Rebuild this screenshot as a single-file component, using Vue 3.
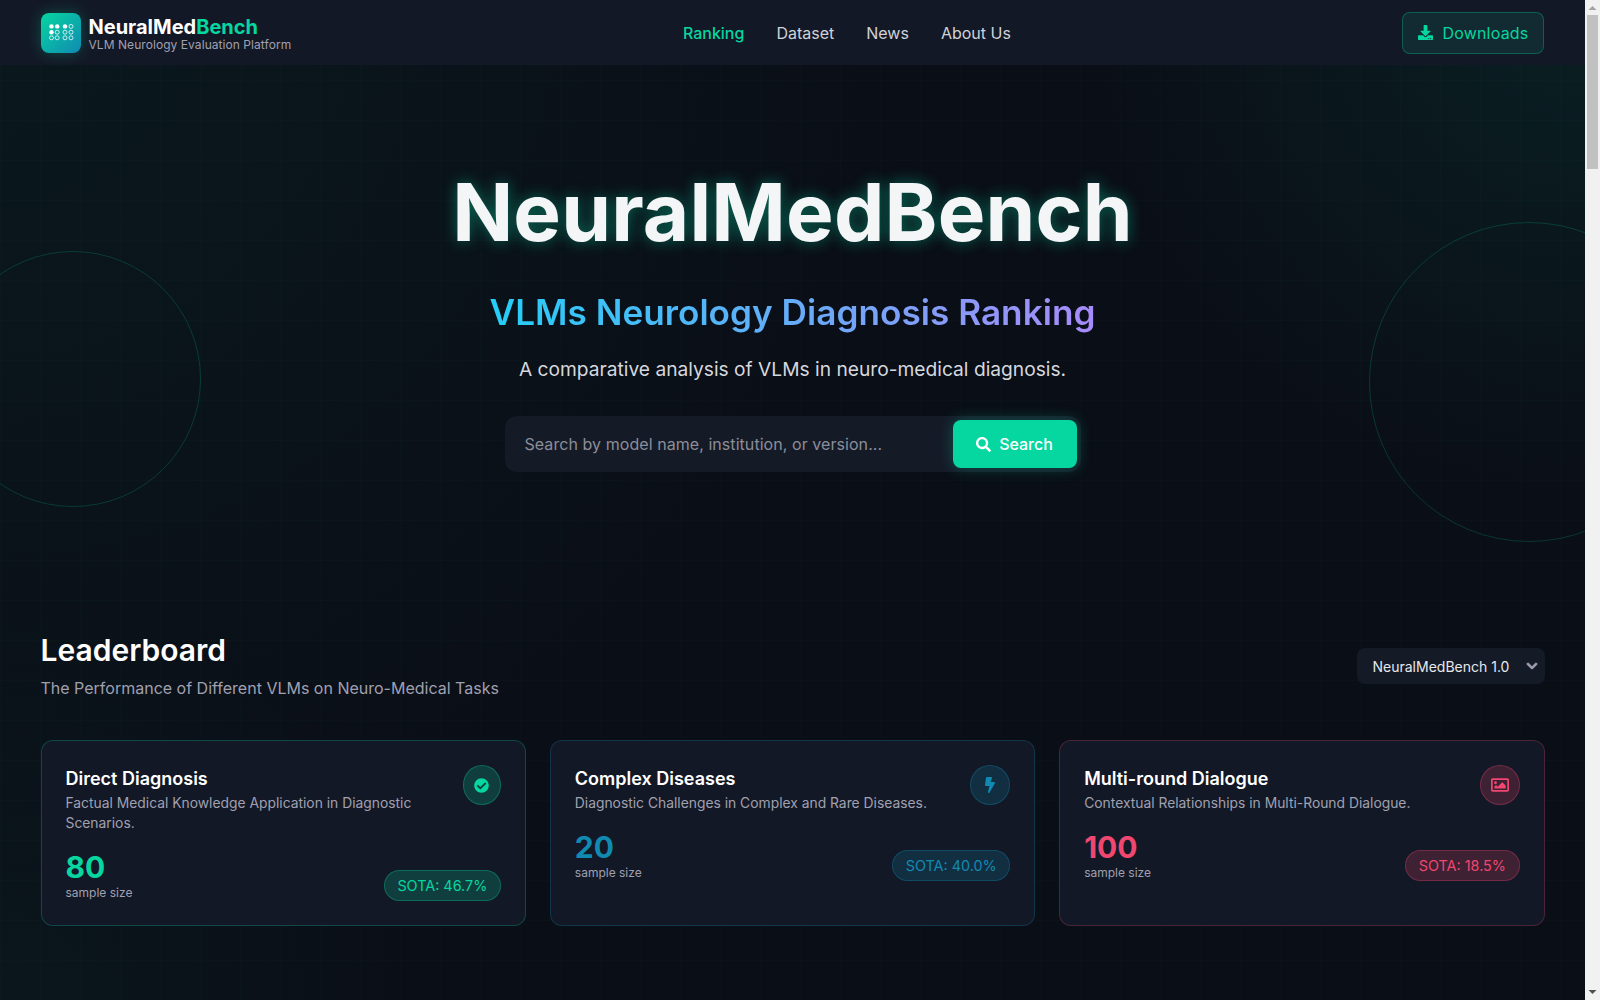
<template>
  <div class="page">
    <div class="content">
      <header class="navbar">
        <div class="nav-inner">
          <a class="brand">
            <span class="logo">
              <svg width="26" height="18" viewBox="0 0 26 18">
                <circle cx="3.5" cy="2.4" r="2.2" fill="#fff" />
                <circle cx="9.2" cy="2.4" r="2.2" fill="#fff" />
                <circle cx="17" cy="2.4" r="2.2" fill="#fff" />
                <circle cx="23" cy="2.4" r="2" class="ring" />
                <circle cx="3.5" cy="8.2" r="2.2" fill="#fff" />
                <circle cx="9.2" cy="8.2" r="2" class="ring" />
                <circle cx="17" cy="8.2" r="2" class="ring" />
                <circle cx="23" cy="8.2" r="2" class="ring" />
                <circle cx="3.5" cy="13.8" r="2" class="ring" />
                <circle cx="9.2" cy="13.8" r="2" class="ring" />
                <circle cx="17" cy="13.8" r="2" class="ring" />
                <circle cx="23" cy="13.8" r="2" class="ring" />
              </svg>
            </span>
            <span class="brand-text">
              <span class="brand-name">NeuralMed<em>Bench</em></span>
              <span class="brand-sub">VLM Neurology Evaluation Platform</span>
            </span>
          </a>
          <nav class="nav-links">
            <a class="active">Ranking</a>
            <a>Dataset</a>
            <a>News</a>
            <a>About Us</a>
          </nav>
          <button class="download-btn">
            <svg width="15" height="15" viewBox="0 0 512 512" fill="currentColor">
              <path d="M216 0h80c13.3 0 24 10.7 24 24v168h87.7c17.8 0 26.7 21.5 14.1 34.1L269.7 378.3c-7.5 7.5-19.8 7.5-27.3 0L90.1 226.1c-12.6-12.6-3.7-34.1 14.1-34.1H192V24c0-13.3 10.7-24 24-24zm296 376v112c0 13.3-10.7 24-24 24H24c-13.3 0-24-10.7-24-24V376c0-13.3 10.7-24 24-24h146.7l49 49c20.1 20.1 52.5 20.1 72.6 0l49-49H488c13.3 0 24 10.7 24 24zm-124 88c0-11-9-20-20-20s-20 9-20 20 9 20 20 20 20-9 20-20zm64 0c0-11-9-20-20-20s-20 9-20 20 9 20 20 20 20-9 20-20z" />
            </svg>
            Downloads
          </button>
        </div>
      </header>

      <section class="hero">
        <span class="circle circle-left"></span>
        <span class="circle circle-right"></span>
        <h1>NeuralMedBench</h1>
        <h2><span>VLMs Neurology Diagnosis Ranking</span></h2>
        <p>A comparative analysis of VLMs in neuro-medical diagnosis.</p>
        <div class="search-box">
          <input type="text" placeholder="Search by model name, institution, or version..." />
          <button class="search-btn">
            <svg width="15" height="15" viewBox="0 0 512 512" fill="currentColor">
              <path d="M505 442.7L405.3 343c-4.5-4.5-10.6-7-17-7H372c27.6-35.3 44-79.7 44-128C416 93.1 322.9 0 208 0S0 93.1 0 208s93.1 208 208 208c48.3 0 92.7-16.4 128-44v16.3c0 6.4 2.5 12.5 7 17l99.7 99.7c9.4 9.4 24.6 9.4 33.9 0l28.3-28.3c9.4-9.4 9.4-24.6.1-34zM208 336c-70.7 0-128-57.2-128-128 0-70.7 57.2-128 128-128 70.7 0 128 57.2 128 128 0 70.7-57.2 128-128 128z" />
            </svg>
            Search
          </button>
        </div>
      </section>

      <section class="leaderboard">
        <div class="board-head">
          <div>
            <h3>Leaderboard</h3>
            <p>The Performance of Different VLMs on Neuro-Medical Tasks</p>
          </div>
          <div class="version-select">
            NeuralMedBench 1.0
            <svg width="12" height="12" viewBox="0 0 448 512" fill="currentColor" stroke="currentColor" stroke-width="36">
              <path d="M207.029 381.476L12.686 187.132c-9.373-9.373-9.373-24.569 0-33.941l22.667-22.667c9.357-9.357 24.522-9.375 33.901-.04L224 284.505l154.745-154.021c9.379-9.335 24.544-9.317 33.901.04l22.667 22.667c9.373 9.373 9.373 24.569 0 33.941L240.971 381.476c-9.373 9.372-24.569 9.372-33.942 0z" />
            </svg>
          </div>
        </div>

        <div class="cards">
          <article v-for="card in cards" :key="card.title" class="card" :class="card.tone">
            <div class="card-top">
              <div>
                <h4>{{ card.title }}</h4>
                <p>{{ card.desc }}</p>
              </div>
              <span class="card-icon">
                <svg :width="card.iconW" :height="card.iconH" :viewBox="card.viewBox" fill="currentColor">
                  <path :d="card.icon" />
                </svg>
              </span>
            </div>
            <div class="card-bottom">
              <div>
                <div class="stat">{{ card.stat }}</div>
                <div class="stat-label">sample size</div>
              </div>
              <span class="sota">SOTA: {{ card.sota }}</span>
            </div>
          </article>
        </div>
      </section>
    </div>

    <aside class="scrollbar">
      <svg width="15" height="15" viewBox="0 0 15 15"><path d="M3.5 10L7.5 6L11.5 10Z" fill="#a3a3a3" /></svg>
      <span class="thumb"></span>
      <span class="track"></span>
      <svg width="15" height="15" viewBox="0 0 15 15"><path d="M3.5 5L7.5 9L11.5 5Z" fill="#505050" /></svg>
    </aside>
  </div>
</template>

<script setup>
const cards = [
  {
    title: "Direct Diagnosis",
    desc: "Factual Medical Knowledge Application in Diagnostic Scenarios.",
    stat: 80,
    sota: "46.7%",
    tone: "green",
    iconW: 15,
    iconH: 15,
    viewBox: "0 0 512 512",
    icon: "M504 256c0 136.967-111.033 248-248 248S8 392.967 8 256 119.033 8 256 8s248 111.033 248 248zM227.314 387.314l184-184c6.248-6.248 6.248-16.379 0-22.627l-22.627-22.627c-6.248-6.249-16.379-6.249-22.628 0L216 308.118l-70.059-70.059c-6.248-6.248-16.379-6.248-22.628 0l-22.627 22.627c-6.248 6.248-6.248 16.379 0 22.627l104 104c6.249 6.249 16.379 6.249 22.628.001z",
  },
  {
    title: "Complex Diseases",
    desc: "Diagnostic Challenges in Complex and Rare Diseases.",
    stat: 20,
    sota: "40.0%",
    tone: "blue",
    iconW: 10,
    iconH: 16,
    viewBox: "0 0 320 512",
    icon: "M296 160H180.6l42.6-129.8C227.2 15 215.7 0 200 0H56C44 0 33.8 8.9 32.2 20.8l-32 240C-1.7 275.2 9.5 288 24 288h118.7L96.6 482.5c-3.6 15.2 8 29.5 23.3 29.5 8.4 0 16.4-4.4 20.8-12l176-304c9.3-15.9-2.2-36-20.7-36z",
  },
  {
    title: "Multi-round Dialogue",
    desc: "Contextual Relationships in Multi-Round Dialogue.",
    stat: 100,
    sota: "18.5%",
    tone: "red",
    iconW: 18,
    iconH: 18,
    viewBox: "0 0 512 512",
    icon: "M464 64H48C21.49 64 0 85.49 0 112v288c0 26.51 21.49 48 48 48h416c26.51 0 48-21.49 48-48V112c0-26.51-21.49-48-48-48zm-6 336H54a6 6 0 0 1-6-6V118a6 6 0 0 1 6-6h404a6 6 0 0 1 6 6v276a6 6 0 0 1-6 6zM128 152c-22.091 0-40 17.909-40 40s17.909 40 40 40 40-17.909 40-40-17.909-40-40-40zM96 352h320v-80l-87.515-87.515c-4.686-4.686-12.284-4.686-16.971 0L192 304l-39.515-39.515c-4.686-4.686-12.284-4.686-16.971 0L96 304v48z",
  },
];
</script>

<style>
html,
body {
  background: #0a0e17;
  overflow: hidden;
}
</style>

<style scoped>
.page {
  --green: #06d6a0;
  --blue: #118ab2;
  --red: #ef476f;
  display: flex;
  height: 100vh;
  overflow: hidden;
  font-family: Inter, "Noto Sans", sans-serif;
  color: #f8f9fa;
}

.scrollbar {
  flex: none;
  width: 15px;
  display: flex;
  flex-direction: column;
  align-items: center;
  background: #f1f1f1;
}

.scrollbar svg {
  flex: none;
}

.thumb {
  flex: none;
  width: 11px;
  height: 154px;
  background: #c1c1c1;
}

.track {
  flex: 1;
}

.content {
  position: relative;
  flex: 1;
  min-width: 0;
  overflow: hidden;
  background-color: #0a0e17;
  background-image:
    linear-gradient(rgba(6, 214, 160, 0.015) 1px, transparent 1px),
    linear-gradient(90deg, rgba(6, 214, 160, 0.015) 1px, transparent 1px),
    radial-gradient(circle at 100% 0, rgba(6, 214, 160, 0.09), transparent 500px),
    radial-gradient(circle at 0 0, rgba(6, 214, 160, 0.05), transparent 900px),
    radial-gradient(circle at 0 1000px, rgba(6, 214, 160, 0.04), transparent 420px);
  background-size: 40px 40px, 40px 40px, 100% 100%, 100% 100%, 100% 100%;
}

.navbar {
  position: relative;
  z-index: 2;
  height: 65px;
  background: #131826;
}

.nav-inner {
  width: 1504px;
  height: 100%;
  margin: 0 auto;
  display: flex;
  justify-content: space-between;
  align-items: center;
}

.brand {
  display: flex;
  align-items: center;
  gap: 8px;
}

.logo {
  width: 40px;
  height: 40px;
  border-radius: 8px;
  display: flex;
  align-items: center;
  justify-content: center;
  background: linear-gradient(135deg, #06d6a0, #118ab2);
  box-shadow: 0 0 15px rgba(6, 214, 160, 0.3);
}

.ring {
  fill: none;
  stroke: #fff;
  stroke-width: 0.9;
  opacity: 0.85;
}

.brand-text {
  display: flex;
  flex-direction: column;
}

.brand-name {
  font-size: 20px;
  font-weight: 700;
  line-height: 24px;
  color: #fff;
}

.brand-name em {
  font-style: normal;
  color: var(--green);
}

.brand-sub {
  font-size: 12px;
  line-height: 12px;
  letter-spacing: 0.06px;
  color: #a0a0b0;
}

.nav-links {
  display: flex;
  gap: 32px;
}

.nav-links a {
  font-size: 16px;
  font-weight: 400;
  color: #cfd2d8;
}

.nav-links a.active {
  font-weight: 500;
  color: var(--green);
}

.download-btn {
  height: 42px;
  padding: 0 15px;
  display: flex;
  align-items: center;
  gap: 9px;
  font-family: inherit;
  font-size: 16px;
  letter-spacing: 0.2px;
  color: var(--green);
  background: rgba(6, 214, 160, 0.1);
  border: 1px solid rgba(6, 214, 160, 0.3);
  border-radius: 8px;
}

.hero {
  position: relative;
  display: flex;
  flex-direction: column;
  align-items: center;
  padding: 99px 0 100px;
}

.circle {
  position: absolute;
  border: 1px solid rgba(6, 214, 160, 0.2);
  border-radius: 50%;
}

.circle-left {
  left: -55px;
  top: 186px;
  width: 254px;
  height: 254px;
}

.circle-right {
  left: 1369px;
  top: 157px;
  width: 318px;
  height: 318px;
}

h1 {
  margin: 0;
  font-size: 80px;
  font-weight: 700;
  line-height: 96px;
  letter-spacing: 0.2px;
  color: #f3f5f7;
  text-shadow: 0 0 15px rgba(6, 214, 160, 0.45);
}

h2 {
  margin: 28px 0 0;
  font-size: 35.2px;
  font-weight: 600;
  line-height: 48px;
}

h2 span {
  background: linear-gradient(90deg, #25cdf7, #a78bfa);
  -webkit-background-clip: text;
  background-clip: text;
  color: transparent;
}

.hero > p {
  margin: 17px 0 0;
  font-size: 19.2px;
  line-height: 32px;
  color: #d5d8dd;
}

.search-box {
  margin-top: 31px;
  width: 576px;
  height: 56px;
  display: flex;
  align-items: center;
  justify-content: space-between;
  background: #151a27;
  border-radius: 12px;
  padding: 0 4px 0 20px;
  box-sizing: border-box;
}

.search-box input {
  flex: 1;
  min-width: 0;
  background: none;
  border: none;
  outline: none;
  padding: 0;
  font-family: inherit;
  font-size: 16px;
  letter-spacing: 0.06px;
  color: #f8f9fa;
}

.search-box input::placeholder {
  color: #8b8e9a;
}

.search-btn {
  width: 124px;
  height: 48px;
  display: flex;
  align-items: center;
  justify-content: center;
  gap: 8px;
  font-family: inherit;
  font-size: 16px;
  font-weight: 500;
  color: #fff;
  background: var(--green);
  border: none;
  border-radius: 8px;
  box-shadow: 0 0 15px rgba(6, 214, 160, 0.3);
}

.leaderboard {
  position: relative;
  width: 1504px;
  margin: 0 auto;
  padding-top: 60px;
}

.board-head {
  display: flex;
  justify-content: space-between;
  align-items: center;
  margin-bottom: 40px;
}

h3 {
  margin: 0;
  font-size: 30px;
  font-weight: 600;
  line-height: 36px;
  color: #fff;
}

.board-head p {
  margin: 8px 0 0;
  font-size: 16px;
  line-height: 24px;
  color: #a0a0b0;
}

.version-select {
  width: 188px;
  height: 36px;
  padding: 0 7px 0 16px;
  box-sizing: border-box;
  display: flex;
  align-items: center;
  justify-content: space-between;
  font-size: 14px;
  color: #e6e8ec;
  background: #151a27;
  border-radius: 8px;
}

.version-select svg {
  color: #a0a0b0;
}

.cards {
  display: grid;
  grid-template-columns: repeat(3, 1fr);
  align-items: stretch;
  gap: 24px;
}

.card {
  --tone: var(--green);
  --tone-rgb: 6, 214, 160;
  padding: 24px;
  background: #131826;
  border: 1px solid rgba(var(--tone-rgb), 0.25);
  border-radius: 12px;
}

.card.blue {
  --tone: var(--blue);
  --tone-rgb: 17, 138, 178;
}

.card.red {
  --tone: var(--red);
  --tone-rgb: 239, 71, 111;
}

.card-top {
  display: flex;
  justify-content: space-between;
  align-items: flex-start;
  gap: 16px;
}

h4 {
  margin: 3px 0 0;
  font-size: 18px;
  font-weight: 600;
  line-height: 22px;
  color: #fff;
}

.card-top p {
  margin: 3px 0 0;
  font-size: 13.85px;
  line-height: 20px;
  color: #a0a0b0;
}

.card-icon {
  flex: 0 0 40px;
  height: 40px;
  box-sizing: border-box;
  display: flex;
  align-items: center;
  justify-content: center;
  color: var(--tone);
  background: rgba(var(--tone-rgb), 0.2);
  border: 1px solid rgba(var(--tone-rgb), 0.3);
  border-radius: 50%;
}

/* the long description squeezes this one in the original */
.card.green .card-icon {
  flex-basis: 38px;
}

.card-bottom {
  display: flex;
  justify-content: space-between;
  align-items: flex-end;
  margin-top: 16px;
}

.stat {
  font-size: 30px;
  font-weight: 700;
  line-height: 36px;
  color: var(--tone);
}

.stat-label {
  font-size: 12px;
  line-height: 16px;
  color: #a0a0b0;
}

.sota {
  padding: 6px 12.5px;
  font-size: 14.4px;
  line-height: 17px;
  color: var(--tone);
  background: rgba(var(--tone-rgb), 0.2);
  border: 1px solid rgba(var(--tone-rgb), 0.3);
  border-radius: 20px;
}
</style>
